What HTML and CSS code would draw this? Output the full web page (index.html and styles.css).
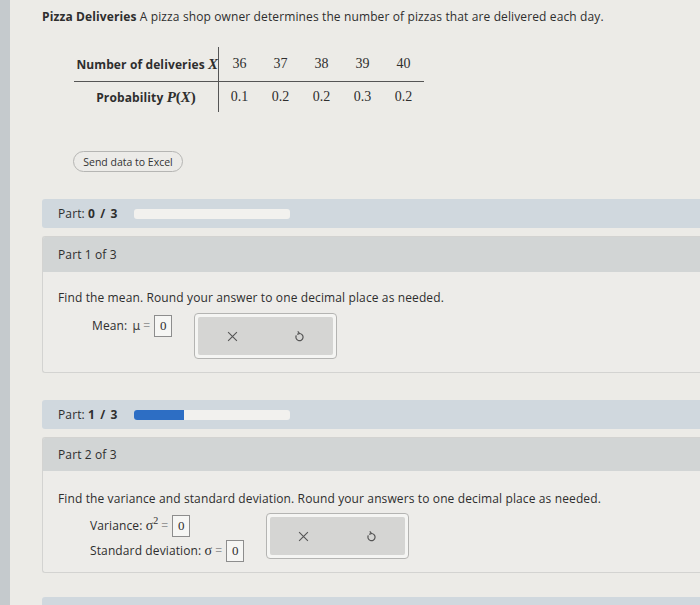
FILE: index.html
```html
<!DOCTYPE html>
<html lang="en">
<head>
<meta charset="utf-8">
<title>Pizza Deliveries</title>
<link rel="stylesheet" href="styles.css">
</head>
<body>
<div class="screen">
  <div class="strip"></div>
  <main class="page">
    <p class="intro"><b>Pizza Deliveries</b> A pizza shop owner determines the number of pizzas that are delivered each day.</p>

    <table class="dist">
      <tr class="r1">
        <th>Number of deliveries <i class="m">X</i></th>
        <td>36</td><td>37</td><td>38</td><td>39</td><td>40</td>
      </tr>
      <tr class="r2">
        <th>Probability <i class="m">P</i><span class="m">(</span><i class="m">X</i><span class="m">)</span></th>
        <td>0.1</td><td>0.2</td><td>0.2</td><td>0.3</td><td>0.2</td>
      </tr>
    </table>

    <button class="excel">Send data to Excel</button>

    <div class="partbar">
      <span class="plabel">Part: <b>0 / 3</b></span>
      <div class="track"><div class="fill" style="width:0%"></div></div>
    </div>

    <section class="card">
      <header class="chead">Part 1 of 3</header>
      <div class="cbody">
        <p class="q">Find the mean. Round your answer to one decimal place as needed.</p>
        <div class="answer">
          <div class="fields">
            <div class="field">Mean: <span class="mu">μ</span><span class="eq">=</span><span class="box">0</span></div>
          </div>
          <div class="actions">
            <div class="actin">
              <span class="act"><svg width="11" height="11" viewBox="0 0 10 10"><path d="M1 1L9 9M9 1L1 9" stroke="#555" stroke-width="1" fill="none"/></svg></span>
              <span class="act"><svg width="11" height="12" viewBox="0 0 10 11"><path d="M5 3.2A3.3 3.3 0 1 1 2.1 4.9" stroke="#555" stroke-width="1.1" fill="none"/><path d="M3.4 1.2L5 3.2L2.9 4" stroke="#555" stroke-width="1.1" fill="none"/></svg></span>
            </div>
          </div>
        </div>
      </div>
    </section>

    <div class="partbar">
      <span class="plabel">Part: <b>1 / 3</b></span>
      <div class="track"><div class="fill" style="width:32%"></div></div>
    </div>

    <section class="card card2">
      <header class="chead">Part 2 of 3</header>
      <div class="cbody">
        <p class="q">Find the variance and standard deviation. Round your answers to one decimal place as needed.</p>
        <div class="answer">
          <div class="fields">
            <div class="field">Variance: <span class="m">σ<sup>2</sup></span><span class="eq">=</span><span class="box">0</span></div>
            <div class="field">Standard deviation: <span class="m">σ</span><span class="eq">=</span><span class="box">0</span></div>
          </div>
          <div class="actions">
            <div class="actin">
              <span class="act"><svg width="11" height="11" viewBox="0 0 10 10"><path d="M1 1L9 9M9 1L1 9" stroke="#555" stroke-width="1" fill="none"/></svg></span>
              <span class="act"><svg width="11" height="12" viewBox="0 0 10 11"><path d="M5 3.2A3.3 3.3 0 1 1 2.1 4.9" stroke="#555" stroke-width="1.1" fill="none"/><path d="M3.4 1.2L5 3.2L2.9 4" stroke="#555" stroke-width="1.1" fill="none"/></svg></span>
            </div>
          </div>
        </div>
      </div>
    </section>

    <div class="partbar tail"></div>
  </main>
</div>
</body>
</html>
```

FILE: styles.css
```css
html, body {
  margin: 0;
  padding: 0;
}
body {
  background: #ecebe7;
  font-family: "Open Sans", "DejaVu Sans", sans-serif;
  font-size: 12px;
  letter-spacing: 0.12px;
  color: #2e2e2e;
  width: 700px;
  height: 605px;
  overflow: hidden;
}
.screen {
  display: flex;
  height: 605px;
}
.strip {
  width: 10px;
  flex: none;
  background: #c5cacd;
}
.page {
  flex: 1;
  padding: 8px 0 0 32px;
  min-width: 0;
}
.intro {
  margin: 0;
  line-height: 17px;
}
.intro b {
  font-weight: 700;
}
.m {
  font-family: "Liberation Serif", "Times New Roman", serif;
  font-size: 15px;
  letter-spacing: 0;
}
i.m {
  font-style: italic;
}
.dist {
  border-collapse: collapse;
  margin: 22px 0 0 32px;
}
.dist th {
  font-weight: 700;
  text-align: center;
  border-right: 1px solid #555;
  padding: 0;
  width: 144px;
  white-space: nowrap;
  font-size: 12px;
}
.dist td {
  width: 41px;
  padding: 0;
  text-align: center;
  font-family: "Liberation Serif", "Times New Roman", serif;
  font-size: 14px;
  letter-spacing: 0;
}
.dist .r1 th, .dist .r1 td {
  height: 34px;
  border-bottom: 1px solid #555;
}
.dist .r2 th, .dist .r2 td {
  height: 30px;
}
.dist .r1 th {
  text-align: right;
}
.excel {
  display: block;
  margin: 39px 0 0 31px;
  width: 110px;
  height: 21px;
  border: 1px solid #b5b5b3;
  border-radius: 11px;
  background: #ecebe8;
  font-family: "Open Sans", "DejaVu Sans", sans-serif;
  font-size: 10.5px;
  color: #333;
  padding: 0;
}
.partbar {
  margin-top: 27px;
  height: 29px;
  background: #d0d8de;
  border-radius: 3px 0 0 3px;
  display: flex;
  align-items: center;
  padding-left: 16px;
}
.plabel {
  width: 76px;
}
.plabel b {
  font-weight: 700;
  word-spacing: 2px;
}
.track {
  width: 156px;
  height: 10px;
  background: #f2f1ee;
  border-radius: 3px;
  overflow: hidden;
}
.fill {
  height: 100%;
  background: #2d6ec4;
}
.card {
  margin-top: 8px;
  border: 1px solid #d3d3d1;
  border-right: none;
  border-radius: 3px 0 0 3px;
  background: #edece9;
  overflow: hidden;
}
.chead {
  height: 35px;
  background: #d2d5d5;
  display: flex;
  align-items: center;
  padding-left: 15px;
}
.card2 .chead {
  height: 33px;
}
.cbody {
  padding: 17px 0 13px 15px;
}
.card2 .cbody {
  padding-top: 19px;
  padding-bottom: 10px;
}
.q {
  margin: 0;
  line-height: 17px;
}
.answer {
  display: flex;
  align-items: flex-start;
  gap: 22px;
  margin: 8px 0 0 34px;
}
.card2 .answer {
  margin-left: 32px;
  margin-top: 7px;
}
.fields {
  display: flex;
  flex-direction: column;
  gap: 2px;
}
.field {
  display: flex;
  align-items: center;
  height: 23px;
  white-space: pre;
}
.mu {
  font-family: "DejaVu Sans", sans-serif;
  font-size: 12px;
  color: #444;
  margin-left: 2px;
}
.field .m {
  font-size: 14px;
}
.field sup {
  font-size: 10px;
  vertical-align: 6px;
  line-height: 0;
}
.eq {
  color: #999;
  margin: 0 4px 0 3px;
}
.box {
  display: inline-flex;
  align-items: center;
  justify-content: center;
  width: 16px;
  height: 20px;
  border: 1px solid #8d8d8d;
  background: #f6f6f4;
  font-family: "Liberation Serif", "Times New Roman", serif;
  font-size: 13px;
  letter-spacing: 0;
}
.actions {
  width: 143px;
  height: 46px;
  border: 1px solid #b4b4b2;
  border-radius: 4px;
  background: #f5f5f3;
  padding: 3px;
  box-sizing: border-box;
  margin-top: -1px;
}
.actin {
  display: flex;
  height: 100%;
  background: #d5d5d3;
  border-radius: 2px;
}
.act {
  flex: 1;
  display: flex;
  align-items: center;
  justify-content: center;
}
.tail {
  margin-top: 24px;
  height: 8px;
  border-radius: 3px 0 0 0;
}
```
